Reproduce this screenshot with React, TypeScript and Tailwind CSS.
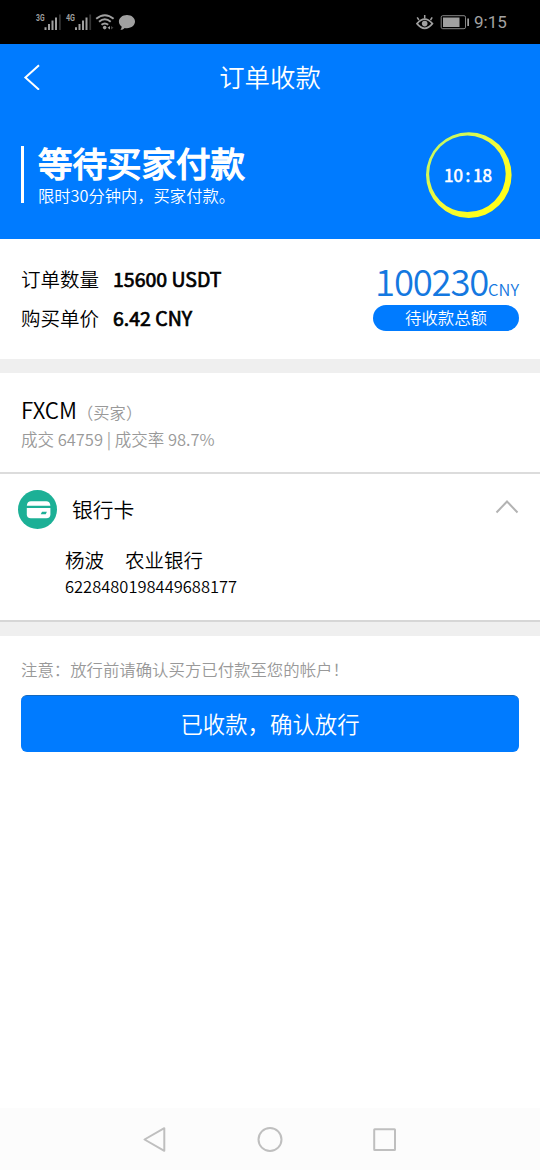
function StatusBar() {
    return (
        <div className="flex h-11 items-center justify-between bg-black pl-[35px] pr-[32px] text-[#a3a3a3]">
            <svg width="101" height="24" viewBox="35 10 101 24" fill="#a0a0a0">
                <text x="36" y="21" fontSize="9" fontWeight="700" textLength="8.5" lengthAdjust="spacingAndGlyphs" fontFamily="Roboto, sans-serif">3G</text>
                <path d="M44.500 27.300h2v2.700h-2zM48 24h2v6h-2zM51.500 20.500h2v9.500h-2zM55 17.500h2v12.500h-2z" />
                <path d="M59 14.500h1.800v15.500H59z" fill="#333" />
                <text x="66" y="21" fontSize="9" fontWeight="700" textLength="9" lengthAdjust="spacingAndGlyphs" fontFamily="Roboto, sans-serif">4G</text>
                <path d="M75 27.300h2v2.700h-2zM78.500 24h2v6h-2zM82 20.500h2v9.500h-2zM85.500 17.500h2v12.500h-2z" />
                <path d="M89.300 14.500h1.800v15.500h-1.800z" fill="#333" />
                <g fill="none" stroke="#a0a0a0" strokeWidth="1.9">
                    <path d="M96.200 18.800Q104.800 11.500 113.600 18.800" />
                    <path d="M99 21.800Q104.800 16.800 110.700 21.800" />
                    <path d="M101.500 24.800Q104.800 22 108.200 24.800" />
                </g>
                <circle cx="104.700" cy="27.600" r="1.800" />
                <path d="M107.500 27.700l2.500-1.700v3.400z" />
                <path d="M111 26l2.500 1.700-2.500 1.700z" fill="#444" />
                <path d="M127 15c4.600 0 8 2.900 8 6.600s-3.400 6.600-8 6.600c-.9 0-1.600-.1-2.300-.3-1 1.200-2.600 1.900-4.300 1.900.9-.9 1.300-1.900 1.200-3.200-1.700-1.200-2.700-3-2.700-5 0-3.700 3.500-6.600 8.100-6.600z" />
            </svg>
            <div className="flex items-center">
                <svg width="54" height="24" viewBox="416 10 54 24" fill="none" stroke="#a0a0a0">
                    <path d="M417 23.600Q424.700 14.700 432.400 23.600Q424.700 33 417 23.600z" strokeWidth="1.700" />
                    <path d="M424.700 18.500v-3.400M418.900 20l-1.700-2.600M430.500 20l1.700-2.600" strokeWidth="1.500" />
                    <circle cx="424.700" cy="23.600" r="2.800" fill="#a0a0a0" stroke="none" />
                    <rect x="441.200" y="15.700" width="24.300" height="13" rx="1.500" strokeWidth="1" stroke="#858585" />
                    <path d="M443 17.500h16.500v9.500H443zM467.300 18.500h1.700v7.500h-1.700z" fill="#a0a0a0" stroke="none" />
                </svg>
                <span className="ml-[4px] w-[34px] whitespace-nowrap font-[Roboto,sans-serif] text-[17px] font-normal leading-6">9:15</span>
            </div>
        </div>
    );
}

function Header() {
    return (
        <div className="h-[195px] bg-[#007bff] text-white">
            <div className="grid h-16 grid-cols-[1fr_auto_1fr] items-center px-[21px]">
                <svg width="20" height="28" viewBox="21 63 20 28" fill="none" stroke="currentColor" strokeWidth="2">
                    <path d="M39 66.200L25.400 78.500L39 90.700" />
                </svg>
                <h1 className="pb-[1px] text-[25.400px] [font-weight:350] leading-8">订单收款</h1>
            </div>
            <div className="flex items-start justify-between pl-[21px] pr-[28px] pt-6">
                <div className="mt-[14px] h-[57px] border-l-[3px] border-white pl-[14px]">
                    <h2 className="-mt-[2px] text-[34.500px] font-normal leading-9 [-webkit-text-stroke:1.400px]">等待买家付款</h2>
                    <p className="mt-[5px] text-[16.300px] leading-5">限时30分钟内，买家付款。</p>
                </div>
                <div className="grid h-[87px] w-[87px] place-items-center">
                    <svg className="col-start-1 row-start-1" width="87" height="87" viewBox="425 132 87 87">
                        <defs>
                            <linearGradient id="ring" x1="0" y1="0" x2="1" y2="1">
                                <stop offset="0.15" stopColor="#c8f860" />
                                <stop offset="0.5" stopColor="#f4fa38" />
                                <stop offset="0.8" stopColor="#ffff1c" />
                            </linearGradient>
                        </defs>
                        <path fill="url(#ring)" fillRule="evenodd" d="M426 175.100a42.800 42.800 0 1 0 85.600 0a42.800 42.800 0 1 0-85.600 0zM429.100 173.800a38.300 38.300 0 1 0 76.600 0a38.300 38.300 0 1 0-76.600 0z" />
                    </svg>
                    <span className="col-start-1 row-start-1 flex pb-[2px] pr-[1px] text-[17.100px] font-normal leading-5 [-webkit-text-stroke:0.600px]">
                        10<span className="w-[10px] text-center">:</span>18
                    </span>
                </div>
            </div>
        </div>
    );
}

function OrderSummary() {
    return (
        <div className="flex h-[120px] justify-between px-[21px]">
            <div className="pt-[20px] text-[19.500px] leading-[39px]">
                <p className="flex gap-[14px]">订单数量<span className="font-normal [-webkit-text-stroke:0.700px]">15600 USDT</span></p>
                <p className="flex gap-[14px]">购买单价<span className="font-normal [-webkit-text-stroke:0.700px]">6.42 CNY</span></p>
            </div>
            <div className="w-[146px] pt-[19px]">
                <p className="flex h-[47px] items-baseline justify-end whitespace-nowrap text-[#1478e0]">
                    <span className="text-[36.500px] leading-[46px] tracking-[-1.200px]">100230</span>
                    <span className="text-[16.500px] leading-5">CNY</span>
                </p>
                <p className="h-[26px] rounded-full bg-[#007bff] text-center text-[16.400px] leading-[25px] text-white">待收款总额</p>
            </div>
        </div>
    );
}

function Buyer() {
    return (
        <div className="h-[101px] border-b-2 border-[#dcdcdc] px-[21px] pt-[20px] text-[#999]">
            <p className="flex items-baseline leading-8">
                <span className="text-[22.400px] text-black">FXCM</span>
                <span className="text-[16.300px]">（买家）</span>
            </p>
            <p className="-mt-[1px] text-[16.500px] leading-6">成交 64759 | 成交率 98.7%</p>
        </div>
    );
}

function BankCard() {
    return (
        <div className="h-[146px] pt-[16px]">
            <div className="flex items-center pl-[18px] pr-[21px]">
                <svg width="39" height="39" viewBox="0 0 39 39">
                    <circle cx="19.500" cy="19.500" r="19.500" fill="#1cb096" />
                    <path d="M13 11.300h15.200q3.800 0 4.200 4.400h-23.600q.4-4.400 4.200-4.400z" fill="#fff" />
                    <path d="M8.800 18h23.600v6.200q0 4-4 4H12.800q-4 0-4-4z" fill="#fff" />
                    <path d="M24 21.700h4.900l-1.200 2.600h-5z" fill="#1cb096" />
                </svg>
                <span className="ml-[15px] pb-[1px] text-[20.800px] leading-8">银行卡</span>
                <svg className="ml-auto" width="24" height="22" viewBox="0 0 24 22" fill="none" stroke="#b3b3b3" strokeWidth="2">
                    <path d="M1.500 13.500L12 2.500L22.500 13.500" />
                </svg>
            </div>
            <div className="pl-[65px] pt-[19px]">
                <p className="flex gap-[21px] text-[19.500px] leading-6"><span>杨波</span><span>农业银行</span></p>
                <p className="mt-[2px] text-[16.500px] leading-6">6228480198449688177</p>
            </div>
        </div>
    );
}

function NavBar() {
    return (
        <div className="mt-auto flex h-[62px] items-center justify-center bg-[#fcfcfc]">
            <svg width="260" height="30" viewBox="140 1124 260 30" fill="none" stroke="#bfbfbf" strokeWidth="2" strokeLinejoin="round">
                <path d="M164.300 1128.200v22.600L144.500 1139.500z" />
                <circle cx="270" cy="1139.500" r="11.500" />
                <rect x="374.200" y="1129.200" width="20.800" height="20.800" rx="0.500" />
            </svg>
        </div>
    );
}

export default function App() {
    return (
        <div className="flex h-[1170px] w-[540px] flex-col bg-white font-['Noto_Sans_CJK_SC',sans-serif] text-black [font-weight:350]">
            <StatusBar />
            <Header />
            <OrderSummary />
            <div className="h-[14px] bg-[#efefef]"></div>
            <Buyer />
            <BankCard />
            <div className="h-[16px] border-t-2 border-[#d6d6d6] bg-[#efefef]"></div>
            <div className="px-[21px] pt-[21px]">
                <p className="text-[16.400px] leading-6 text-[#999]">注意：放行前请确认买方已付款至您的帐户！</p>
                <button className="mt-[14px] h-[57px] w-full rounded-md border-t border-[#1468bd] bg-[#007bff] text-[22.400px] text-white">已收款，确认放行</button>
            </div>
            <NavBar />
        </div>
    );
}
